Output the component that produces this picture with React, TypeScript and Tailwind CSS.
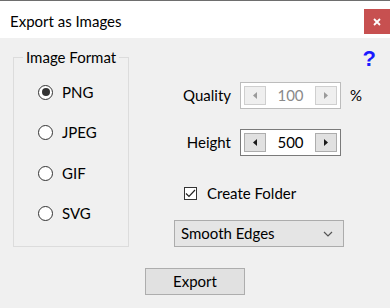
import { useState } from "react";

const font = "font-['Lato',sans-serif]";

function Radio({ label, checked, onClick }: { label: string; checked: boolean; onClick: () => void }) {
  return (
    <div className="flex h-5 items-center cursor-default" onClick={onClick}>
      <span className="flex h-[15px] w-[15px] items-center justify-center rounded-full border border-[#333] bg-white">
        {checked && <span className="h-[8px] w-[8px] rounded-full bg-[#333]" />}
      </span>
      <span className="ml-[9px] text-[15px] text-black">{label}</span>
    </div>
  );
}

function Arrow({ dir, color }: { dir: "left" | "right"; color: string }) {
  return (
    <svg width="4" height="7" viewBox="0 0 4 7">
      {dir === "left" ? <path d="M4 0 L0 3.5 L4 7 Z" fill={color} /> : <path d="M0 0 L4 3.5 L0 7 Z" fill={color} />}
    </svg>
  );
}

function Spinner({ value, disabled }: { value: number; disabled?: boolean }) {
  const btn = disabled
    ? "border-[#cfcfcf] bg-[#efefef]"
    : "border-[#adadad] bg-[#e1e1e1]";
  const arrow = disabled ? "#9a9a9a" : "#1a1a1a";
  return (
    <div
      className={`flex h-[27px] w-[101px] items-center justify-between bg-white px-[3px] ${
        disabled ? "border border-[#bcbcbc]" : "border border-[#7a7a7a]"
      }`}
    >
      <div className={`flex h-[19px] w-[22px] items-center justify-center border ${btn}`}>
        <Arrow dir="left" color={arrow} />
      </div>
      <span className={`text-[15px] ${disabled ? "text-[#8a8a8a]" : "text-black"}`}>{value}</span>
      <div className={`flex h-[19px] w-[22px] items-center justify-center border ${btn}`}>
        <Arrow dir="right" color={arrow} />
      </div>
    </div>
  );
}

export default function App() {
  const [format, setFormat] = useState("PNG");
  const [folder, setFolder] = useState(true);

  return (
    <div className={`flex h-[308px] w-[390px] flex-col overflow-hidden ${font}`}>
      {/* title bar */}
      <div className="flex h-[38px] items-start justify-between border-t border-[#6e6e6e] bg-white">
        <span className="ml-[10px] mt-[9px] text-[15px] text-black">Export as Images</span>
        <div className="mt-[8px] flex h-[25px] w-[26px] items-center justify-center bg-[#c75050]">
          <svg width="8" height="8" viewBox="0 0 8 8">
            <path d="M1 1 L7 7 M7 1 L1 7" stroke="white" strokeWidth="1.8" />
          </svg>
        </div>
      </div>

      <div className="flex-1 bg-[#f0f0f0]">
        <div className="flex">
          <fieldset className="ml-[13px] mt-[9px] h-[200px] w-[116px] border border-[#dcdcdc]">
            <legend className="ml-[9px] h-5 px-[3px] text-[15px] leading-5 text-black">Image Format</legend>
            <div className="ml-[24px] mt-[15px] flex flex-col gap-[20.5px]">
              {["PNG", "JPEG", "GIF", "SVG"].map((f) => (
                <Radio key={f} label={f} checked={format === f} onClick={() => setFormat(f)} />
              ))}
            </div>
          </fieldset>

          <div className="ml-[45px] flex w-[216px] flex-col">
            <div className="mt-[9px] flex h-[24px] justify-end pr-[14px]">
              <span className="font-['Liberation_Sans',sans-serif] text-[22px] font-bold leading-[24px] text-[#1a1aff]">?</span>
            </div>

            <div className="mt-[11px] flex h-[27px] items-center">
              <span className="w-[57px] text-right text-[15px] text-black">Quality</span>
              <div className="ml-[9px]">
                <Spinner value={100} disabled />
              </div>
              <span className="ml-[9px] text-[15px] text-black">%</span>
            </div>

            <div className="mt-[20px] flex h-[27px] items-center">
              <span className="w-[57px] text-right text-[15px] text-black">Height</span>
              <div className="ml-[9px]">
                <Spinner value={500} />
              </div>
            </div>

            <div className="ml-[10px] mt-[27px] flex h-5 items-center cursor-default" onClick={() => setFolder(!folder)}>
              <span className="flex h-[13px] w-[13px] items-center justify-center border border-[#333] bg-white">
                {folder && (
                  <svg width="11" height="9" viewBox="0 0 11 9">
                    <path d="M1 4.5 L4 7.5 L10 1" fill="none" stroke="#222" strokeWidth="1.2" />
                  </svg>
                )}
              </span>
              <span className="ml-[10px] text-[15px] text-black">Create Folder</span>
            </div>

            <div className="mt-[17px] flex h-[27px] w-[170px] items-center justify-between border border-[#acacac] bg-[#e5e5e5] pl-[6px] pr-[10px]">
              <span className="text-[15px] text-black">Smooth Edges</span>
              <svg width="10" height="6" viewBox="0 0 10 6">
                <path d="M1 1 L5 5 L9 1" fill="none" stroke="#555" strokeWidth="1.2" />
              </svg>
            </div>
          </div>
        </div>

        <button className="mx-auto mt-[21px] flex h-[27px] w-[100px] items-center justify-center border border-[#adadad] bg-[#e1e1e1] text-[15px] text-black">
          Export
        </button>
      </div>
    </div>
  );
}
